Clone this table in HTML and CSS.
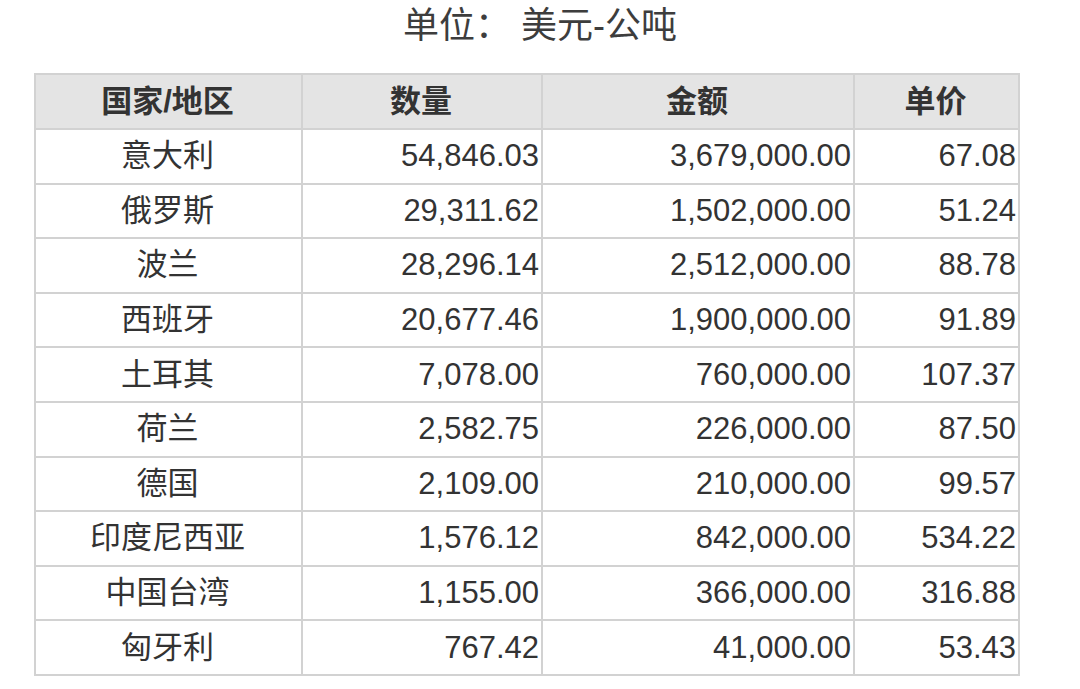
FILE: index.html
```html
<!DOCTYPE html>
<html lang="zh">
<head>
<meta charset="utf-8">
<link rel="stylesheet" href="styles.css">
</head>
<body>
<div class="page">
  <div class="title">单位： 美元-公吨</div>
  <table class="data">
    <colgroup>
      <col class="c1"><col class="c2"><col class="c3"><col class="c4">
    </colgroup>
    <thead>
      <tr><th>国家/地区</th><th>数量</th><th>金额</th><th>单价</th></tr>
    </thead>
    <tbody>
      <tr><td class="name">意大利</td><td>54,846.03</td><td>3,679,000.00</td><td>67.08</td></tr>
      <tr><td class="name">俄罗斯</td><td>29,311.62</td><td>1,502,000.00</td><td>51.24</td></tr>
      <tr><td class="name">波兰</td><td>28,296.14</td><td>2,512,000.00</td><td>88.78</td></tr>
      <tr><td class="name">西班牙</td><td>20,677.46</td><td>1,900,000.00</td><td>91.89</td></tr>
      <tr><td class="name">土耳其</td><td>7,078.00</td><td>760,000.00</td><td>107.37</td></tr>
      <tr><td class="name">荷兰</td><td>2,582.75</td><td>226,000.00</td><td>87.50</td></tr>
      <tr><td class="name">德国</td><td>2,109.00</td><td>210,000.00</td><td>99.57</td></tr>
      <tr><td class="name">印度尼西亚</td><td>1,576.12</td><td>842,000.00</td><td>534.22</td></tr>
      <tr><td class="name">中国台湾</td><td>1,155.00</td><td>366,000.00</td><td>316.88</td></tr>
      <tr><td class="name">匈牙利</td><td>767.42</td><td>41,000.00</td><td>53.43</td></tr>
    </tbody>
  </table>
</div>
</body>
</html>
```
FILE: styles.css
```css
html, body {
  margin: 0;
  padding: 0;
  background: #ffffff;
}
body {
  font-family: "Liberation Sans", "Noto Sans CJK SC", sans-serif;
  color: #333333;
}
.page {
  width: 1080px;
  height: 689px;
  overflow: hidden;
  display: flex;
  flex-direction: column;
  align-items: flex-start;
}
.title {
  align-self: center;
  font-size: 36px;
  line-height: 40px;
  margin-top: 6px;
  color: #3d3d3d;
  white-space: pre;
}
.data {
  margin-top: 27px;
  margin-left: 34px;
  border-collapse: collapse;
  table-layout: fixed;
  width: 984px;
  font-size: 31px;
}
.c1 { width: 267px; }
.c2 { width: 240px; }
.c3 { width: 312px; }
.c4 { width: 165px; }
.data th, .data td {
  border: 2px solid #d2d2d2;
  padding: 0 2px 0 0;
  height: 54.6px;
  box-sizing: border-box;
  text-align: right;
  white-space: nowrap;
  line-height: 34px;
}
.data th {
  background: #e4e4e4;
  text-align: center;
  font-weight: bold;
  height: 55px;
  color: #333333;
}
.data td.name {
  text-align: center;
}
```
